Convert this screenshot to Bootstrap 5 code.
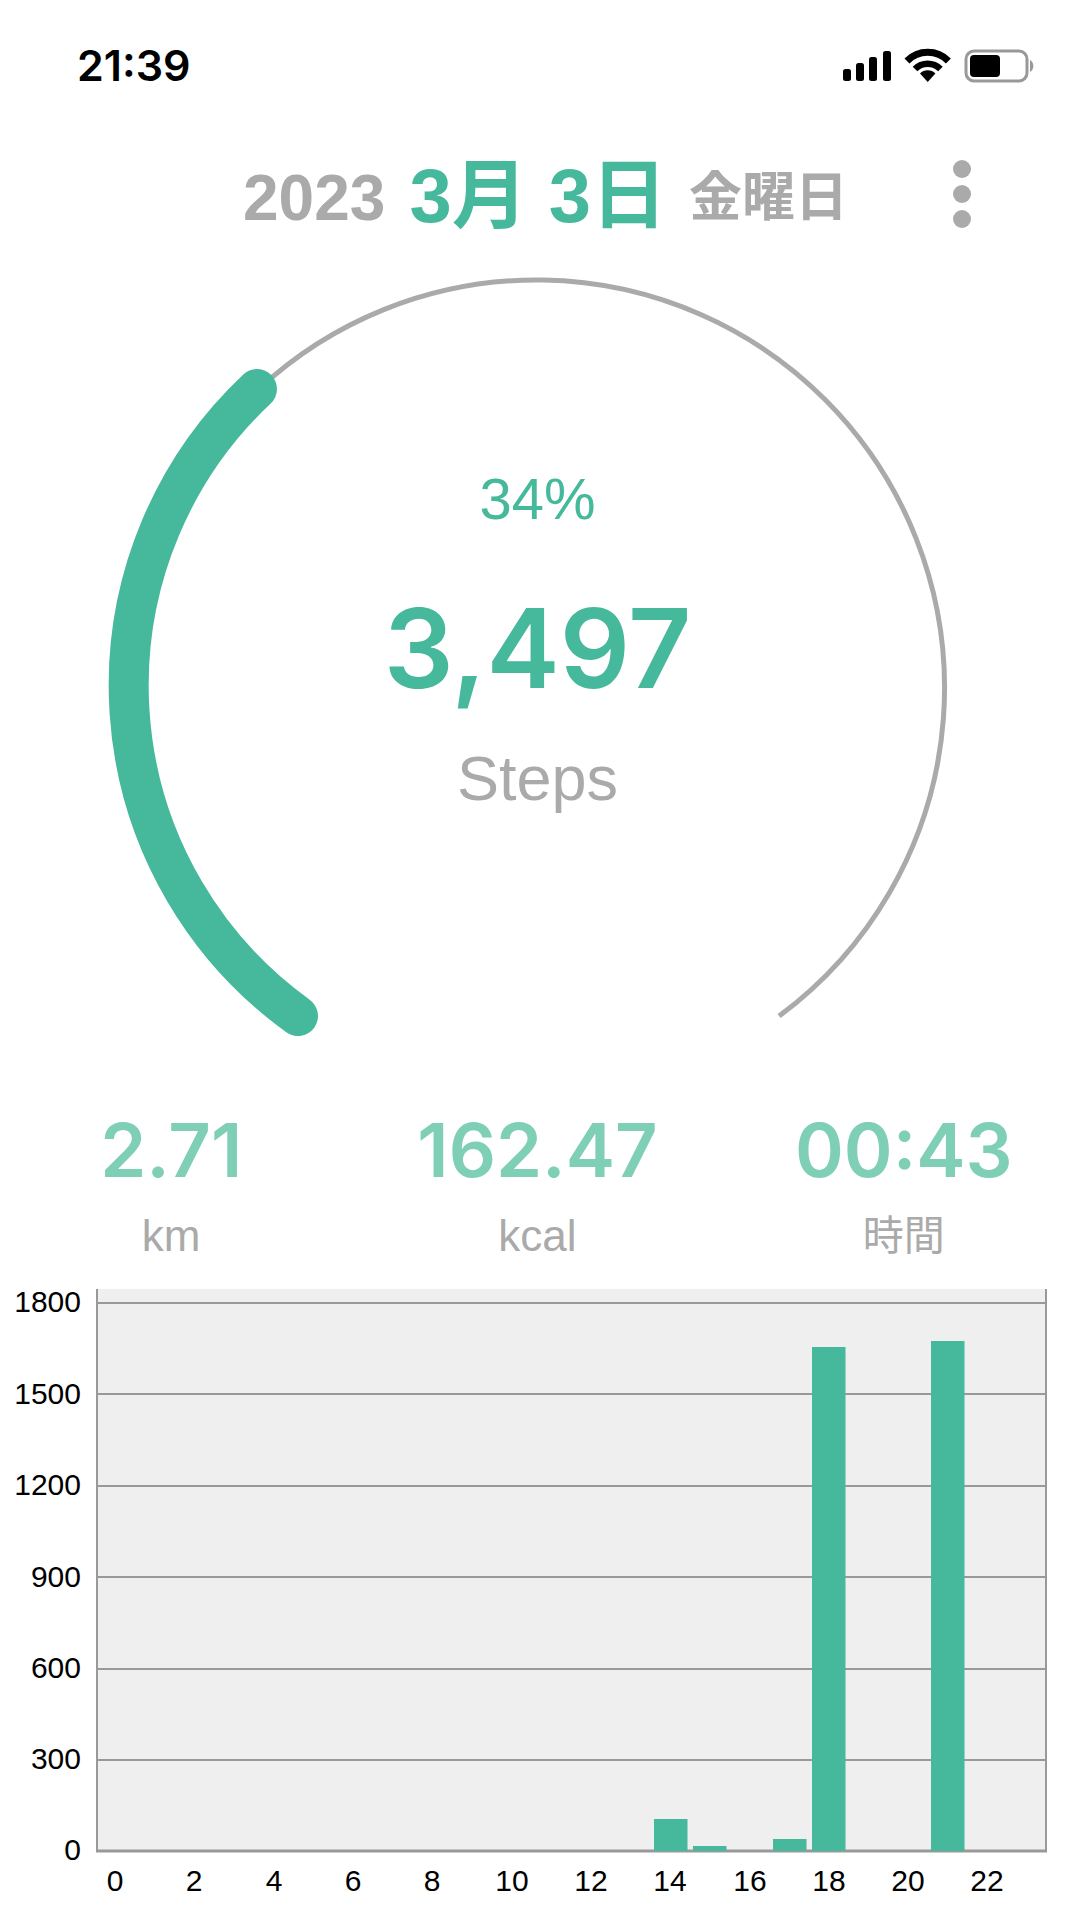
<!DOCTYPE html>
<html lang="ja">
  <head>
    <meta charset="UTF-8" />
    <meta name="viewport" content="width=device-width, initial-scale=1.0" />
    <title>Steps</title>
    <link
      rel="stylesheet"
      href="https://cdn.jsdelivr.net/npm/bootstrap@5.3.0/dist/css/bootstrap.min.css"
    />
    <style>
      body {
        background-color: #fff;
        font-family: "Liberation Sans", "Noto Sans CJK JP", sans-serif;
        overflow-x: hidden;
        width: 1075px;
        height: 1920px;
      }
      .status-bar {
        height: 100px;
        padding: 0 0 0 77px;
      }
      .status-time {
        font-family: Inter, sans-serif;
        font-size: 43px;
        font-weight: 600;
        line-height: 1;
        color: #000;
        margin-top: 44px;
      }
      .status-icons {
        margin: 45px 0 0 auto;
        width: 232px;
      }
      .date-line {
        height: 160px;
        padding-left: 243px;
        color: #aaa;
        font-weight: 700;
      }
      .date-year {
        font-size: 64px;
        margin-top: 63px;
        line-height: 70px;
      }
      .date-day {
        color: #46b89b;
        font-size: 76px;
        line-height: 84px;
        margin: 54px 22px 0 24px;
      }
      .date-week {
        font-size: 53px;
        margin-top: 63px;
        line-height: 70px;
      }
      .more-dots {
        margin: 60px 0 0 auto;
        position: relative;
        right: 104px;
        gap: 7px;
      }
      .more-dots span {
        width: 18px;
        height: 18px;
        border-radius: 50%;
        background: #aaa;
      }
      .gauge-wrap {
        height: 820px;
      }
      .gauge-center {
        top: 204px;
        left: 0;
        right: 0;
      }
      .gauge-pct {
        color: #46b89b;
        font-size: 58px;
        line-height: 70px;
      }
      .gauge-steps {
        font-family: Inter, "Liberation Sans", sans-serif;
        color: #46b89b;
        font-size: 110px;
        font-weight: 600;
        line-height: 140px;
        margin-top: 44px;
      }
      .gauge-unit {
        color: #aaa;
        font-size: 63px;
        line-height: 70px;
        margin-top: 25px;
      }
      .stat-value {
        font-family: Inter, "Liberation Sans", sans-serif;
        color: #7fceb6;
        font-size: 74px;
        font-weight: 600;
        line-height: 90px;
      }
      .stat-label {
        color: #aaa;
        font-size: 44px;
        line-height: 50px;
        margin-top: 16px;
      }
      .stat-label-ja {
        font-size: 41px;
      }
      .stats-row {
        height: 201px;
        padding-top: 25px;
      }
      .chart-svg {
        display: block;
      }
      .chart-svg text {
        font-family: "Liberation Sans", sans-serif;
        font-size: 30px;
        fill: #000;
      }
    </style>
  </head>

  <body>
    <!-- Status bar -->
    <div class="status-bar d-flex">
      <div class="status-time">21:39</div>
      <div class="status-icons">
        <svg width="192" height="40" viewBox="0 0 192 40">
          <rect x="0" y="24" width="8" height="12" rx="2.5" fill="#000" />
          <rect x="13" y="18" width="8" height="18" rx="2.5" fill="#000" />
          <rect x="26" y="12" width="8" height="24" rx="2.5" fill="#000" />
          <rect x="40" y="6" width="8" height="30" rx="2.5" fill="#000" />
          <path d="M64 16 A29 29 0 0 1 105.4 16" fill="none" stroke="#000" stroke-width="7" />
          <path d="M72 24 A18 18 0 0 1 97.4 24" fill="none" stroke="#000" stroke-width="6.5" />
          <path d="M84.7 37 L77 28.5 A11 11 0 0 1 92.4 28.5 Z" fill="#000" />
          <rect x="123" y="6" width="61" height="30" rx="8" fill="none" stroke="#999" stroke-width="3" />
          <rect x="127" y="10" width="30" height="22" rx="4" fill="#000" />
          <path d="M187 15 A7 7 0 0 1 187 27 Z" fill="#999" />
        </svg>
      </div>
    </div>

    <!-- Date -->
    <div class="date-line d-flex">
      <div class="date-year">2023</div>
      <div class="date-day">3月 3日</div>
      <div class="date-week">金曜日</div>
      <div class="more-dots d-flex flex-column">
        <span></span><span></span><span></span>
      </div>
    </div>

    <!-- Gauge -->
    <div class="gauge-wrap position-relative">
      <svg width="1075" height="820" viewBox="0 260 1075 820">
        <path d="M257.9 389.9 A408 408 0 0 1 825 399.5 A408 408 0 0 1 779.1 1016.1" fill="none" stroke="#aaa" stroke-width="5" />
        <path d="M298 1016 A407 407 0 0 1 257 389" fill="none" stroke="#46b89b" stroke-width="40" stroke-linecap="round" />
      </svg>
      <div class="gauge-center position-absolute text-center">
        <div class="gauge-pct">34%</div>
        <div class="gauge-steps">3,497</div>
        <div class="gauge-unit">Steps</div>
      </div>
    </div>

    <!-- Stats -->
    <div class="row stats-row text-center">
      <div class="col-4">
        <div class="stat-value">2.71</div>
        <div class="stat-label">km</div>
      </div>
      <div class="col-4">
        <div class="stat-value">162.47</div>
        <div class="stat-label">kcal</div>
      </div>
      <div class="col-4">
        <div class="stat-value">00:43</div>
        <div class="stat-label stat-label-ja">時間</div>
      </div>
    </div>

    <!-- Hourly chart -->
    <svg class="chart-svg" width="1075" height="640" viewBox="0 1280 1075 640">
      <rect x="97" y="1288" width="949" height="562" fill="#efefef" />
      <g stroke="#999" stroke-width="2">
        <line x1="97" y1="1302" x2="1046" y2="1302" />
        <line x1="97" y1="1393" x2="1046" y2="1393" />
        <line x1="97" y1="1485" x2="1046" y2="1485" />
        <line x1="97" y1="1576" x2="1046" y2="1576" />
        <line x1="97" y1="1668" x2="1046" y2="1668" />
        <line x1="97" y1="1759" x2="1046" y2="1759" />
        <line x1="97" y1="1288" x2="97" y2="1850" />
        <line x1="1046" y1="1288" x2="1046" y2="1850" />
        <line x1="96" y1="1850" x2="1047" y2="1850" stroke-width="3" />
      </g>
      <g fill="#46b89b">
        <rect x="654" y="1818" width="33.5" height="32" />
        <rect x="693" y="1845" width="33.5" height="5" />
        <rect x="773" y="1838" width="33.5" height="12" />
        <rect x="812" y="1346" width="33.5" height="504" />
        <rect x="931" y="1340" width="33.5" height="510" />
      </g>
      <g text-anchor="end">
        <text x="81" y="1311">1800</text>
        <text x="81" y="1403">1500</text>
        <text x="81" y="1494">1200</text>
        <text x="81" y="1586">900</text>
        <text x="81" y="1677">600</text>
        <text x="81" y="1768">300</text>
        <text x="81" y="1859">0</text>
      </g>
      <g text-anchor="middle">
        <text x="115" y="1890">0</text>
        <text x="194" y="1890">2</text>
        <text x="274" y="1890">4</text>
        <text x="353" y="1890">6</text>
        <text x="432" y="1890">8</text>
        <text x="512" y="1890">10</text>
        <text x="591" y="1890">12</text>
        <text x="670" y="1890">14</text>
        <text x="750" y="1890">16</text>
        <text x="829" y="1890">18</text>
        <text x="908" y="1890">20</text>
        <text x="987" y="1890">22</text>
      </g>
    </svg>

    <script src="https://cdn.jsdelivr.net/npm/bootstrap@5.3.0/dist/js/bootstrap.bundle.min.js"></script>
  </body>
</html>
